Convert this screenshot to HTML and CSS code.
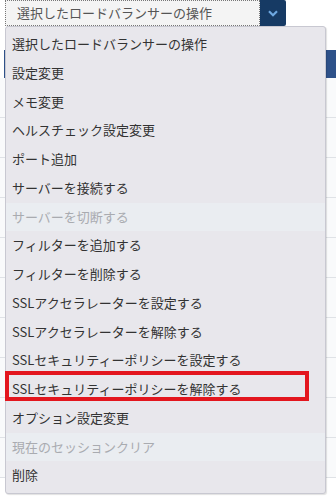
FILE: index.html
```html
<!doctype html>
<html lang="ja">
  <head>
    <meta charset="UTF-8" />
    <meta name="viewport" content="width=device-width, initial-scale=1.0" />
    <title>ロードバランサーの操作</title>
    <link rel="stylesheet" href="styles.css">
  </head>
  <body>
    <div class="toolbar">
      <div class="select">選択したロードバランサーの操作</div>
      <button class="select-btn">
        <svg width="10" height="7" viewBox="0 0 10 7">
          <path d="M1 1.2 L5 5.2 L9 1.2" fill="none" stroke="#6ea8e2" stroke-width="2.2" />
        </svg>
      </button>
    </div>

    <!-- list behind the open menu -->
    <div class="lb-table">
      <div class="lb-head"></div>
      <div class="lb-row"></div>
      <div class="lb-row"></div>
      <div class="lb-row"></div>
      <div class="lb-row"></div>
      <div class="lb-row"></div>
      <div class="lb-row"></div>
      <div class="lb-row"></div>
      <div class="lb-row"></div>
      <div class="lb-row"></div>
      <div class="lb-row"></div>
    </div>

    <ul class="menu">
      <li class="item">選択したロードバランサーの操作</li>
      <li class="item">設定変更</li>
      <li class="item">メモ変更</li>
      <li class="item">ヘルスチェック設定変更</li>
      <li class="item">ポート追加</li>
      <li class="item">サーバーを接続する</li>
      <li class="item disabled">サーバーを切断する</li>
      <li class="item">フィルターを追加する</li>
      <li class="item">フィルターを削除する</li>
      <li class="item">SSLアクセラレーターを設定する</li>
      <li class="item">SSLアクセラレーターを解除する</li>
      <li class="item">SSLセキュリティーポリシーを設定する</li>
      <li class="item">SSLセキュリティーポリシーを解除する</li>
      <li class="item">オプション設定変更</li>
      <li class="item disabled">現在のセッションクリア</li>
      <li class="item">削除</li>
    </ul>

    <div class="mark"></div>
  </body>
</html>
```

FILE: styles.css
```css
body {
  margin: 0;
  font-family: 'Noto Sans CJK JP', 'Noto Sans', sans-serif;
  font-size: 13px;
  color: #333;
  background: #fff;
  overflow: hidden;
}
.toolbar {
  display: flex;
  padding-left: 5px;
  height: 26px;
}
.select {
  box-sizing: border-box;
  width: 255px;
  height: 26px;
  border: 1px dotted #777;
  background: #f4f4f4;
  color: #555;
  padding-left: 11px;
  line-height: 23px;
}
.select-btn {
  width: 26px;
  height: 26px;
  border: none;
  border-radius: 0 2px 2px 0;
  background: #163a64;
  padding: 0;
  display: flex;
  align-items: center;
  justify-content: center;
}
.lb-table {
  margin-top: 24px;
}
.lb-head {
  height: 28px;
  margin-left: 4px;
  background: #2e5189;
}
.lb-row {
  height: 39px;
  border-bottom: 1px solid #dfe2e6;
  background: #f9fafb;
}
.menu {
  position: absolute;
  left: 5px;
  top: 26px;
  box-sizing: border-box;
  width: 321px;
  height: 468px;
  margin: 0;
  padding: 3px 0 0;
  list-style: none;
  background: #e8e7ec;
  border: 1px solid #c8c8d1;
  border-radius: 3px;
  box-shadow: 1px 1px 1px rgba(0, 0, 0, 0.12);
}
.item {
  height: 28.75px;
  line-height: 28.75px;
  padding-left: 6px;
  white-space: nowrap;
}
.disabled {
  background: #eaedf1;
  color: #a9abb0;
}
.mark {
  position: absolute;
  left: 5px;
  top: 371px;
  width: 296px;
  height: 22px;
  border: 4px solid #e3161e;
}
```
